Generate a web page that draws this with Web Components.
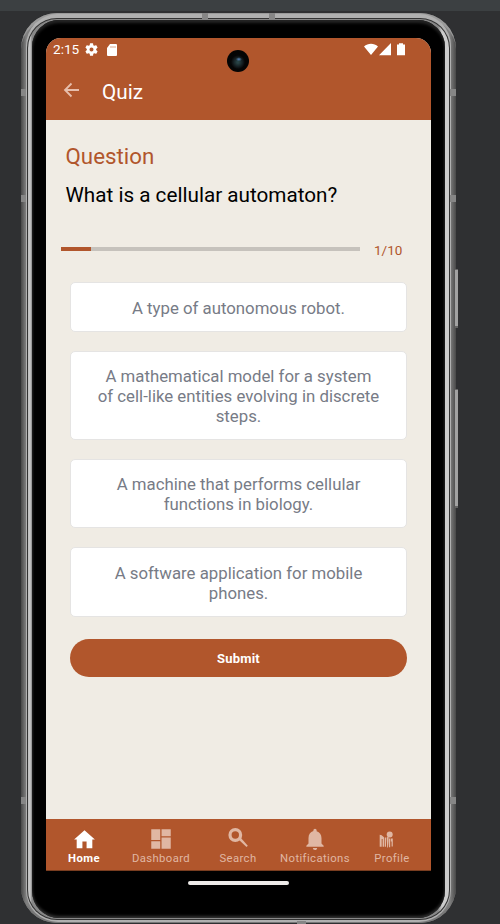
<!DOCTYPE html>
<html lang="en"><head><meta charset="utf-8"><title>Quiz</title>
<style>html,body{margin:0;height:924px;overflow:hidden;background:#2f3032}</style></head>
<body><quiz-app></quiz-app>
<script>
const define=(name,html)=>customElements.define(name,class extends HTMLElement{
  constructor(){super();this.attachShadow({mode:'open'}).innerHTML=html.replace(/\{(\w+)\}/g,(m,k)=>this.getAttribute(k)??'');}
});
const icons={
 home:'<svg viewBox="0 0 24 24" width="25" height="25"><path d="M10 20.500v-6.500h4v6.500h5.500v-8.500h2.500L12 3 2 12h2.500v8.500z"/></svg>',
 dashboard:'<svg viewBox="0 0 24 24" width="26" height="26"><path d="M3 13h8.300V3H3zm0 8h8.300v-7H3zm9.500 0H21V10.700h-8.500zm0-18v6.500H21V3z"/></svg>',
 search:'<svg viewBox="0 0 24 24" width="24" height="24"><circle cx="9.300" cy="9" r="5.300" fill="none" stroke="currentColor" stroke-width="3.200"/><path d="m12.500 13.500 2-2 7.300 8.300-1.300 1.300z"/></svg>',
 bell:'<svg viewBox="0 0 24 24" width="26" height="26"><path d="M12 22.200c1.100 0 2-.9 2-2h-4a2 2 0 0 0 2 2zm6-6v-5c0-3.070-1.640-5.640-4.500-6.320V4a1.500 1.500 0 0 0-3 0v.68C7.630 5.360 6 7.920 6 11v5.200l-2 2v1h16v-1z"/></svg>',
 profile:'<svg style="margin-right:12px" viewBox="0 0 24 24" width="24" height="24"><circle cx="15.700" cy="7.500" r="3"/><path d="M5.700 7.800l2 .5 2.300 2V19.800H8.600V12H7.700V19.800H5.700zM10.700 10.500h1.300V19.800h-1.300zM12.600 10.500l2-1V14l-.6 6.500h-.8zM15 11.500h1.200V20.300H15zM16.800 11.500h2V19.500h-1.200v-5h-.8z"/></svg>'
};
customElements.define('ui-icon',class extends HTMLElement{constructor(){super();this.attachShadow({mode:'open'}).innerHTML='<style>:host{display:block;line-height:0}svg{display:block;fill:currentColor}</style>'+icons[this.getAttribute('name')];}});
define('status-bar',`<style>:host{display:flex;height:23px;align-items:center;color:#fff;font:13.600px/23px Roboto,sans-serif;padding:0 25px 0 7px;box-sizing:border-box}svg{fill:#fff;display:block}.gear{margin-left:6px}.sd{margin-left:8px}.right{margin-left:auto;display:flex}</style>
<span><slot></slot></span><svg class="gear" width="13" height="13" viewBox="2 2 20 20"><path d="M19.140 12.940c.04-.3.060-.61.060-.94s-.02-.64-.07-.94l2.030-1.580a.5.5 0 0 0 .12-.61l-1.920-3.320a.5.5 0 0 0-.59-.22l-2.390.96a7 7 0 0 0-1.620-.94l-.36-2.540A.5.5 0 0 0 13.920 2.400h-3.840a.5.5 0 0 0-.47.41l-.36 2.540a7.300 7.300 0 0 0-1.620.94l-2.390-.96a.5.5 0 0 0-.59.220L2.740 8.870a.5.5 0 0 0 .12.610l2.030 1.580a6 6 0 0 0 0 1.880l-2.030 1.580a.5.5 0 0 0-.12.610l1.920 3.320c.12.220.37.290.59.220l2.390-.96c.5.380 1.030.7 1.620.94l.36 2.540c.05.240.24.410.48.410h3.840c.24 0 .44-.17.470-.41l.36-2.540a7 7 0 0 0 1.620-.94l2.390.96c.22.080.47 0 .59-.22l1.920-3.320a.5.5 0 0 0-.12-.61zM12 15.100A3.100 3.100 0 1 1 12 8.900a3.100 3.100 0 0 1 0 6.200z"/></svg>
<svg class="sd" width="12" height="12" viewBox="0 0 12 12"><path d="M4 0h6q1 0 1 1v10q0 1-1 1H2q-1 0-1-1V4z"/><path fill="#dca78d" d="M4.500 2h1v2h-1zM6.500 2h1v2h-1zM8.500 2h1v2h-1z"/></svg>
<div class="right"><svg width="42" height="13" viewBox="0 0 42 13"><path d="M0 3.500C4-.3 10-.3 14 3.500L7 12zM15 12.300 27 0v12.300zM33 1.500h2V0.300h4V1.500h2v10.800h-8z"/></svg></div>`);
define('app-header',`<style>:host{display:flex;align-items:center;height:58px;padding-left:17px;color:#fff;font:20.700px/58px Roboto,sans-serif}svg{margin-right:22px;fill:none;stroke:#e7beac;stroke-width:1.800}span{padding-top:3px}</style><svg width="17" height="16" viewBox="0 0 17 16"><path d="M16 8H2M8.500 1.500 2 8l6.500 6.500"/></svg><span><slot></slot></span>`);
define('quiz-progress',`<style>:host{display:flex;align-items:center;height:20px;color:#b1562c;font:13.500px/20px Roboto,sans-serif}i{display:block;width:299px;height:4px;background:linear-gradient(90deg,#b1562c 30px,#c6c2bc 30px);margin-right:14px}span{padding-top:1px}</style><i></i><span><slot></slot></span>`);
define('answer-card',`<style>:host{display:flex;box-sizing:border-box;align-items:center;justify-content:center;background:#fff;border:1px solid #e5e4e3;border-radius:5px;color:#777b86;font:16.800px/19.700px Roboto,sans-serif;text-align:center;white-space:nowrap;padding-top:3px}</style><div><slot></slot></div>`);
define('submit-button',`<style>:host{display:flex;height:38px;border-radius:19px;background:#b1562c;color:#fff;align-items:center;justify-content:center;font:bold 13px/38px Roboto,sans-serif;letter-spacing:.2px}span{padding-top:1px}</style><span><slot></slot></span>`);
define('nav-item',`<style>:host{display:flex;flex-direction:column;align-items:center;width:77px;color:#e0b7a3;font:11.300px/14px Roboto,sans-serif;letter-spacing:.4px;white-space:nowrap}:host([active]){color:#fff;font-weight:bold}.i{height:26px;display:flex;align-items:center}:host([icon=search]) .i{height:24px;padding-bottom:2px}</style><div class="i"><ui-icon name="{icon}"></ui-icon></div><span><slot></slot></span>`);
define('bottom-nav',`<style>:host{display:flex;box-sizing:border-box;height:52px;padding-top:7px;background:#b1562c;border-bottom:1px solid #793d20}nav{display:flex;margin-left:-.5px}</style><nav><slot></slot></nav>`);
define('phone-frame',`<style>:host{display:block;position:relative;height:924px;background:linear-gradient(#3c4042 11px,#2f3032 11px)}
.shell{position:absolute;left:21px;top:13px;width:435px;height:910px;box-sizing:border-box;border-radius:36px;background:linear-gradient(90deg,#484848,#808080 5px,#808080 429px,#484848);padding:1px 5px 1px 5px}
.shell:before{content:"";position:absolute;inset:0;border-radius:36px;border-top:5px solid #9a9a9a;border-bottom:3px solid #777}
.ring{position:relative;height:100%;box-sizing:border-box;border-radius:32px;background:#b0b0b0;padding:4px 1px 2px}
.line{height:100%;box-sizing:border-box;border-radius:30px;background:#333;padding:1px}
.light{height:100%;box-sizing:border-box;border-radius:29px;background:linear-gradient(90deg,#bbb,#ccc 2px,#888 4px,#888 410px,#ccc 414px);padding:1px 4px}
.glass{height:100%;box-sizing:border-box;border-radius:27px;background:#000;box-shadow:inset 0 3px 3px #242424,inset 0 -2px 3px #333;padding:18px 14px 0}
.screen{height:833px;display:flex;flex-direction:column;border-radius:15px 15px 0 0;overflow:hidden;background:#f0ece4}
.cam{position:absolute;left:227px;top:50px;width:22px;height:22px;border-radius:50%;background:radial-gradient(ellipse 3px 2px at 54% 42%,#5883b9,transparent),radial-gradient(circle at 50% 55%,#284345 1px,#12191c 5px,#050505 7px,#020202)}
.home{position:absolute;left:188px;top:881px;width:101px;height:4px;border-radius:2px;background:#eeebe9}
.b{position:absolute;left:455px;width:3px;background:#a2a2a2;border:solid #656565;border-width:1px 0 2px;box-sizing:border-box}
.m{position:absolute;background:#868686;width:6px;height:7px}</style>
<div class="shell"><div class="ring"><div class="line"><div class="light"><div class="glass"><div class="screen"><slot></slot></div></div></div></div></div></div>
<i class="cam"></i><i class="home"></i><i class="b" style="top:269px;height:59px"></i><i class="b" style="top:389px;height:119px"></i>
<i class="m" style="left:21px;top:89px;width:5px"></i><i class="m" style="left:21px;top:195px;width:5px"></i><i class="m" style="left:21px;top:797px;width:5px"></i>
<i class="m" style="left:450px;top:89px"></i><i class="m" style="left:450px;top:195px"></i><i class="m" style="left:450px;top:797px"></i>
<i class="m" style="left:202px;top:13px"></i><i class="m" style="left:269px;top:13px"></i><i class="m" style="left:297px;top:921px;width:9px;height:3px"></i>`);
define('quiz-app',`<style>:host{display:block}.top{background:#b1562c;height:82px}.content{flex:1;display:flex;flex-direction:column;color:#000;font-family:Roboto,sans-serif}
h1,h2{font-weight:400;margin:0 0 0 19.500px}h1{font-size:22.300px;line-height:26px;color:#b1562c;margin-top:23px}h2{font-size:20.700px;line-height:26px;margin-top:13px}
quiz-progress{margin:31px 0 0 15px}.answers{display:flex;flex-direction:column;gap:19px;margin:23px 24px 0}submit-button{margin:22px 24px 0}</style>
<phone-frame><div class="top"><status-bar>2:15</status-bar><app-header>Quiz</app-header></div>
<main class="content"><h1><span>Question</span></h1><h2><span>What is a cellular automaton?</span></h2><quiz-progress>1/10</quiz-progress>
<div class="answers"><answer-card style="height:50px">A type of autonomous robot.</answer-card><answer-card style="height:89px">A mathematical model for a system<br>of cell-like entities evolving in discrete<br>steps.</answer-card><answer-card style="height:69px">A machine that performs cellular<br>functions in biology.</answer-card><answer-card style="height:70px">A software application for mobile<br>phones.</answer-card></div><submit-button>Submit</submit-button></main>
<bottom-nav><nav-item icon="home" active>Home</nav-item><nav-item icon="dashboard">Dashboard</nav-item><nav-item icon="search">Search</nav-item><nav-item icon="bell">Notifications</nav-item><nav-item icon="profile">Profile</nav-item></bottom-nav></phone-frame>`);
</script></body></html>
